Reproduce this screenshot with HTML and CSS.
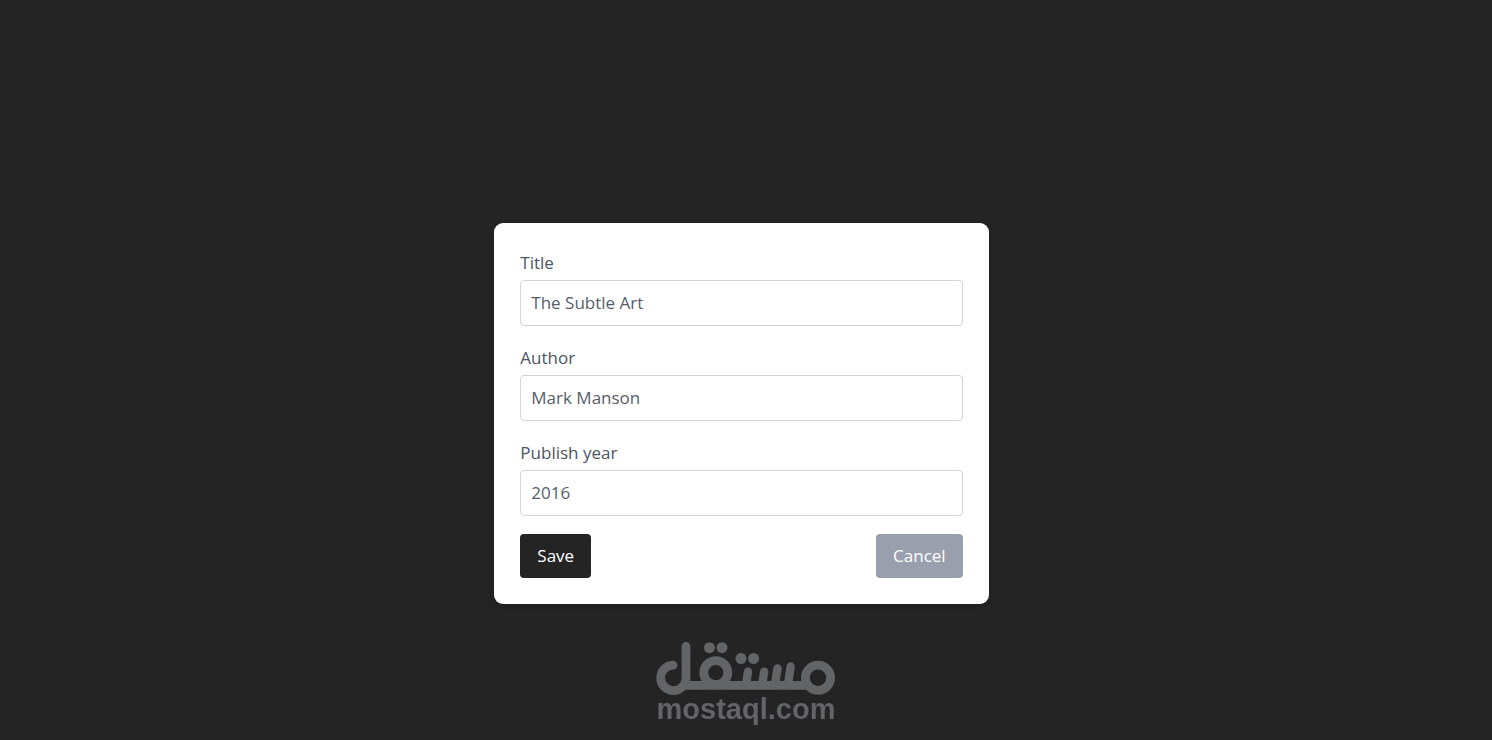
FILE: index.html
```html
<!DOCTYPE html>
<html lang="en">
<head>
  <meta charset="UTF-8">
  <meta name="viewport" content="width=device-width,initial-scale=1">
  <title>Edit book</title>
  <link rel="stylesheet" href="styles.css">
</head>
<body>

  <main class="page">
    <form class="card">
      <div class="field">
        <label for="title">Title</label>
        <input id="title" type="text" value="The Subtle Art">
      </div>
      <div class="field">
        <label for="author">Author</label>
        <input id="author" type="text" value="Mark Manson">
      </div>
      <div class="field">
        <label for="year">Publish year</label>
        <input id="year" type="text" inputmode="numeric" value="2016">
      </div>
      <div class="actions">
        <button type="submit" class="btn btn-save">Save</button>
        <button type="button" class="btn btn-cancel">Cancel</button>
      </div>
    </form>
  </main>

  <!-- Watermark -->
  <div class="watermark">
    <svg width="182" height="54" viewBox="0 0 182 54" fill="none" stroke="currentColor" stroke-width="8.8" stroke-linecap="round" aria-hidden="true">
      <path d="M18 24.2A12.7 12.7 0 1 0 31 38V5.3"/>
      <path stroke-linecap="butt" d="M27 44.4H154"/>
      <circle cx="163" cy="36.8" r="12.6"/>
      <circle cx="60.8" cy="31.7" r="12"/>
      <path stroke-width="8.4" d="M91 44L93 30.7M107 44L109.2 30.7M119.8 44L122.5 27.5M133 44L135.6 25.5"/>
      <g fill="currentColor" stroke="none">
        <circle cx="54.4" cy="6.7" r="5.5"/>
        <circle cx="67" cy="6.7" r="5.5"/>
        <circle cx="86" cy="17.5" r="5.5"/>
        <circle cx="98.6" cy="17.5" r="5.5"/>
      </g>
    </svg>
    <span>mostaql.com</span>
  </div>

</body>
</html>
```

FILE: styles.css
```css
*{margin:0;padding:0;box-sizing:border-box;}
body{
  background:#242424;
  color:#4b5563;
  font-family:"Segoe UI","Open Sans","Noto Sans",sans-serif;
  font-size:17px;
  line-height:28px;
}
.page{
  min-height:100vh;
  padding:86px 9px 0 0;
  display:flex; align-items:center; justify-content:center;
}
.card{
  width:33.3333%; min-width:320px;
  padding:26px;
  background:#fff;
  border-radius:9px;
  box-shadow:0 2px 6px rgba(0,0,0,0.15);
}
.field{margin-bottom:18px;}
.field label{
  display:block;
  margin-bottom:3px;
}
.field input{
  display:block; width:100%; height:46px;
  padding:0 10px;
  border:1px solid #d1d5db; border-radius:4px;
  background:#fff;
  font:inherit; color:#565e69;
}
.actions{display:flex; justify-content:space-between;}
.btn{
  height:44px; padding:0 17px;
  border:none; border-radius:4px;
  font:inherit; color:#fff;
  cursor:pointer;
}
.btn-save{background:#242424;}
.btn-cancel{background:#9a9fad;}

/* Watermark */
.watermark{
  position:fixed; left:0; right:0; bottom:17px;
  display:flex; flex-direction:column; align-items:center;
  color:#636466;
  pointer-events:none;
}
.watermark span{
  font-family:"Liberation Sans",Arial,sans-serif;
  font-size:29px; line-height:28px; font-weight:bold;
}
```
